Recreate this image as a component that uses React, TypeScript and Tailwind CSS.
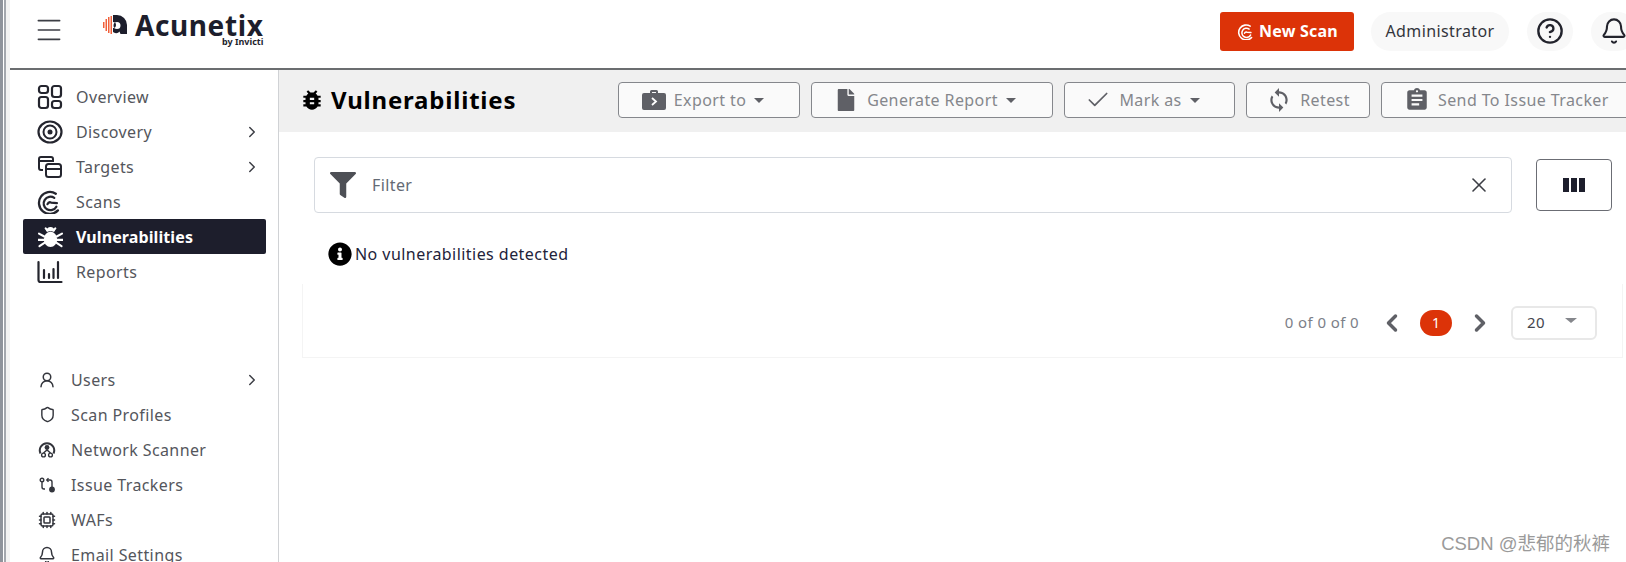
import { Bell, Check, ChevronRight, ChevronLeft, CircleHelp, Cpu, Menu, Shield, UserRound, X } from 'lucide-react';
import { FaFile, FaFilter, FaInfoCircle } from 'react-icons/fa';
import { MdAssignment, MdBugReport, MdSync } from 'react-icons/md';

const ScanMark = ({ className }: { className?: string }) => (
    <svg viewBox="0 0 24 24" fill="none" stroke="currentColor" strokeWidth="2.2" strokeLinecap="round" className={className}>
        <path d="M20 4.500A10.500 10.500 0 1 0 22 20.500" />
        <path d="M18.500 8.500A6.500 6.500 0 1 0 20.500 17" />
        <path d="M21 13.500 15.500 13a2.800 2.800 0 0 0-3.500 1.500" />
    </svg>
);

const BugIcon = ({ className }: { className?: string }) => (
    <svg viewBox="0 0 26 24" className={className}>
        <ellipse cx="13" cy="15" rx="7" ry="8" fill="currentColor" />
        <path d="M8.500 6.500a4.500 4.500 0 0 1 9 0z" fill="currentColor" />
        <path d="M8 3.500 10 6M18 3.500 16 6M1 9l5.500 3M25 9l-5.500 3M0 15.500h6M26 15.500h-6M1.500 22l5.500-3.500M24.500 22 19 18.500" stroke="currentColor" strokeWidth="2.200" strokeLinecap="round" fill="none" />
    </svg>
);

const OverviewIcon = () => (
    <svg viewBox="0 0 26 26" fill="none" stroke="currentColor" strokeWidth="2.2" className="w-[26px] h-[26px]">
        <rect x="2" y="2" width="9" height="7" rx="2.5" />
        <rect x="15" y="2" width="9" height="11" rx="2.5" />
        <rect x="2" y="13" width="9" height="11" rx="2.5" />
        <rect x="15" y="17" width="9" height="7" rx="2.5" />
    </svg>
);

const DiscoveryIcon = () => (
    <svg viewBox="0 0 26 26" fill="none" stroke="currentColor" className="w-[26px] h-[26px]">
        <ellipse cx="13" cy="13" rx="11.5" ry="10.5" strokeWidth="2.2" />
        <circle cx="13" cy="13" r="6.5" strokeWidth="2" />
        <circle cx="13" cy="13" r="2.5" fill="currentColor" stroke="none" />
    </svg>
);

const TargetsIcon = () => (
    <svg viewBox="0 0 26 26" fill="none" stroke="currentColor" strokeWidth="2" className="w-[26px] h-[26px]">
        <path d="M6 16H4a2 2 0 0 1-2-2V5a2 2 0 0 1 2-2h10a2 2 0 0 1 2 2v3" />
        <path d="M2 7h14" />
        <rect x="9" y="10" width="15" height="13" rx="2.5" />
        <path d="M9 15h15" />
    </svg>
);

const ReportsIcon = () => (
    <svg viewBox="0 0 26 26" fill="none" stroke="currentColor" strokeWidth="2.2" strokeLinecap="round" className="w-[26px] h-[26px]">
        <path d="M1.500 3v18a2 2 0 0 0 2 2h21" />
        <path d="M7 11v8M12 15v4M16.500 10v9M21 3v16" />
    </svg>
);

const NetworkIcon = () => (
    <svg viewBox="0 0 18 16" fill="none" stroke="currentColor" className="w-[18px] h-4">
        <path d="M2.500 11.500A7.200 7.200 0 1 1 15.500 11.500" strokeWidth="2" />
        <circle cx="9" cy="5.500" r="2.400" fill="currentColor" stroke="none" />
        <path d="M5.500 11 9 8l3.500 3" strokeWidth="1.500" />
        <circle cx="5.500" cy="13" r="1.900" strokeWidth="1.400" />
        <circle cx="12.500" cy="13" r="1.900" strokeWidth="1.400" />
    </svg>
);

const TrackerIcon = () => (
    <svg viewBox="0 0 16 16" fill="none" stroke="currentColor" strokeWidth="1.4" className="w-4 h-4">
        <circle cx="3" cy="3" r="1.800" />
        <path d="M3 5v5a2 2 0 0 0 2 2h1" />
        <path d="M8 3h3a2 2 0 0 1 2 2v5" />
        <path d="M9.500 1.300 7.800 3l1.700 1.700" />
        <circle cx="13" cy="12.500" r="2.200" fill="currentColor" />
    </svg>
);

const BriefcaseIcon = () => (
    <svg viewBox="0 0 24 22" className="w-6 h-[22px]">
        <path fill="#5f6066" d="M8 4V2.500A1.500 1.500 0 0 1 9.500 1h5A1.500 1.500 0 0 1 16 2.500V4h6a2 2 0 0 1 2 2v13a2 2 0 0 1-2 2H2a2 2 0 0 1-2-2V6a2 2 0 0 1 2-2h6Zm2-1v1h4V3h-4Z" />
        <path fill="none" stroke="#fff" strokeWidth="1.800" d="m10 9 4 3.500-4 3.500" />
    </svg>
);

const CaretDown = () => <span className="w-0 h-0 border-x-[5px] border-x-transparent border-t-[5px] border-t-[#5f6066]" />;

const MAIN_NAV = [
    { label: 'Overview', icon: <OverviewIcon /> },
    { label: 'Discovery', icon: <DiscoveryIcon />, more: true },
    { label: 'Targets', icon: <TargetsIcon />, more: true },
    { label: 'Scans', icon: <ScanMark className="w-[25px] h-[25px] -translate-x-[3px]" /> },
    { label: 'Vulnerabilities', icon: <BugIcon className="w-[25px] h-[23px]" />, active: true },
    { label: 'Reports', icon: <ReportsIcon /> },
];

const SETTINGS_NAV = [
    { label: 'Users', icon: <UserRound className="w-[18px] h-[18px]" />, more: true },
    { label: 'Scan Profiles', icon: <Shield className="w-[17px] h-[17px]" /> },
    { label: 'Network Scanner', icon: <NetworkIcon /> },
    { label: 'Issue Trackers', icon: <TrackerIcon /> },
    { label: 'WAFs', icon: <Cpu className="w-[18px] h-[18px]" /> },
    { label: 'Email Settings', icon: <Bell className="w-[18px] h-[18px]" /> },
];

export default function App() {
    return (
        <div className="relative flex w-[1626px] h-[562px] overflow-hidden bg-white font-['Noto_Sans',sans-serif] text-[#54565c]">
            {/* screenshot edge */}
            <div className="w-[10px] shrink-0 flex">
                <div className="w-[3px] bg-[#8f949c]" />
                <div className="w-[1px] bg-white" />
                <div className="w-[2px] bg-[#a4a8ae]" />
                <div className="w-[4px] bg-[#f3f3f3]" />
            </div>

            <div className="flex-1 min-w-0 flex flex-col">
                <header className="h-[70px] shrink-0 flex items-center border-b-2 border-[#6b6d70] relative">
                    <Menu className="ml-[23px] w-[32px] h-[32px] text-[#3c3e45] -mt-[8px]" strokeWidth={1.2} />
                    <div className="ml-[38px] flex flex-col -mt-[8px]">
                        <div className="flex items-center gap-[8px] h-[22px]">
                            <svg viewBox="0 0 24 20" className="w-[24px] h-[20px]">
                                <path fill="#f0603a" d="M0 7h1.500v6H0zM2.500 4H4v12H2.500zM5 2h1.500v16H5zM7.500 1H9v18H7.500z" />
                                <path fill="#1d1e2c" fillRule="evenodd" d="M10 0h4a10 10 0 0 1 10 10v9h-6.500l-1-2.500A4.500 4.500 0 0 1 10 17v2h0v-6a3 3 0 0 0 0-6zM14 7a3.500 3.500 0 1 0 0 7 3.500 3.500 0 0 0 0-7z" />
                            </svg>
                            <span className="text-[28px] font-bold leading-[22px] tracking-[0.6px] text-[#1d1e2c]">Acunetix</span>
                        </div>
                        <span className="self-end text-[9px] font-bold leading-[9px] mt-[1px] text-[#1d1e2c]">by Invicti</span>
                    </div>
                    <div className="ml-auto flex items-center -mr-[11px]">
                        <button className="w-[134px] h-[39px] mb-[6px] rounded-[3px] bg-[#dc3308] text-white text-[16px] tracking-[0.2px] font-bold flex items-center justify-center gap-[6px]">
                            <ScanMark className="w-[17px] h-[17px]" />
                            New Scan
                        </button>
                        <div className="ml-[17px] w-[138px] h-[39px] mb-[6px] rounded-full bg-[#f8f8f8] text-[16px] tracking-[0.4px] text-[#33353c] flex items-center justify-center">Administrator</div>
                        <div className="ml-[18px] w-[46px] h-[39px] mb-[6px] rounded-full bg-[#f8f8f8] flex items-center justify-center">
                            <CircleHelp className="w-[28px] h-[28px] text-[#22232c]" strokeWidth={2} />
                        </div>
                        <div className="ml-[18px] w-[46px] h-[39px] mb-[6px] rounded-full bg-[#f8f8f8] flex items-center justify-center">
                            <Bell className="w-[28px] h-[28px] text-[#22232c]" strokeWidth={1.8} />
                        </div>
                    </div>
                </header>

                <div className="flex-1 flex min-h-0">
                    <aside className="w-[269px] shrink-0 border-r border-[#d0d2d5] pt-[9px] pl-[13px] pr-[12px] overflow-hidden">
                        {MAIN_NAV.map((item) => (
                            <div key={item.label} className={`h-[35px] flex items-center pl-[14px] pr-[5px] text-[16px] ${item.active ? 'bg-[#1d1e2c] text-white font-bold rounded-[2px] tracking-[0.1px]' : 'text-[#54565c] tracking-[0.4px]'}`}>
                                <span className={`w-[26px] flex justify-center ${item.active ? 'text-white' : 'text-[#24252e]'}`}>{item.icon}</span>
                                <span className="ml-[13px]">{item.label}</span>
                                {item.more && <ChevronRight className="ml-auto w-[18px] h-[18px] text-[#3c3e45]" />}
                            </div>
                        ))}
                        <div className="h-[73px]" />
                        {SETTINGS_NAV.map((item) => (
                            <div key={item.label} className="h-[35px] flex items-center pl-[14px] pr-[5px] text-[16px] tracking-[0.4px] text-[#54565c]">
                                <span className="w-[20px] flex justify-center text-[#33353c]">{item.icon}</span>
                                <span className="ml-[14px]">{item.label}</span>
                                {item.more && <ChevronRight className="ml-auto w-[18px] h-[18px] text-[#3c3e45]" />}
                            </div>
                        ))}
                    </aside>

                    <main className="flex-1 min-w-0 overflow-hidden">
                        <div className="h-[62px] bg-[#f0f0f0] flex items-center pl-[20px] overflow-hidden">
                            <div className="w-[319px] shrink-0 flex items-center gap-[6px] mb-[2px]">
                                <MdBugReport className="w-[26px] h-[26px] text-black" />
                                <h1 className="text-[24px] font-bold text-black tracking-[0.8px]">Vulnerabilities</h1>
                            </div>
                            <div className="flex gap-[11px] shrink-0 mb-[2px] text-[16px] tracking-[0.4px] text-[#85878c]">
                                <button className="w-[182px] h-[36px] border border-[#85878c] rounded-[4px] bg-[#fafafa] flex items-center justify-center gap-[8px] pr-[12px]">
                                    <BriefcaseIcon />
                                    <span>Export to</span>
                                    <CaretDown />
                                </button>
                                <button className="w-[242px] h-[36px] border border-[#85878c] rounded-[4px] bg-[#fafafa] flex items-center justify-center gap-[8px] pr-[12px]">
                                    <FaFile className="w-[20px] h-[22px] text-[#5f6066]" />
                                    <span className="ml-[3px]">Generate Report</span>
                                    <CaretDown />
                                </button>
                                <button className="w-[171px] h-[36px] border border-[#85878c] rounded-[4px] bg-[#fafafa] flex items-center justify-center gap-[8px] pr-[14px]">
                                    <Check className="w-[26px] h-[26px] text-[#5f6066]" strokeWidth={1.600} />
                                    <span>Mark as</span>
                                    <CaretDown />
                                </button>
                                <button className="w-[124px] h-[36px] border border-[#85878c] rounded-[4px] bg-[#fafafa] flex items-center justify-center gap-[8px]">
                                    <MdSync className="w-[26px] h-[26px] text-[#5f6066]" />
                                    <span>Retest</span>
                                </button>
                                <button className="w-[252px] h-[36px] border border-[#85878c] rounded-[4px] bg-[#fafafa] flex items-center pl-[22px] gap-[8px]">
                                    <MdAssignment className="w-[26px] h-[26px] text-[#5f6066]" />
                                    <span>Send To Issue Tracker</span>
                                </button>
                            </div>
                        </div>

                        <div className="pl-[35px] pt-[25px] flex items-center gap-[24px]">
                            <div className="w-[1198px] h-[56px] border border-[#d6dae0] rounded-[4px] flex items-center pl-[14px] pr-[20px]">
                                <FaFilter className="w-[28px] h-[26px] text-[#4d4f55]" />
                                <span className="ml-[15px] text-[16px] tracking-[0.4px] text-[#646a74]">Filter</span>
                                <X className="ml-auto w-[24px] h-[24px] text-[#3c3e45]" strokeWidth={1.600} />
                            </div>
                            <div className="w-[76px] h-[52px] border border-[#6b6d74] rounded-[4px] flex items-center justify-center gap-[2px]">
                                <span className="w-[6px] h-[14px] bg-[#1d1e2c]" />
                                <span className="w-[6px] h-[14px] bg-[#1d1e2c]" />
                                <span className="w-[6px] h-[14px] bg-[#1d1e2c]" />
                            </div>
                        </div>

                        <div className="pl-[49px] mt-[29px] flex items-center gap-[3px] text-[16px] tracking-[0.45px] text-[#22233a]">
                            <FaInfoCircle className="w-[24px] h-[24px] text-black" />
                            <span>No vulnerabilities detected</span>
                        </div>

                        <div className="ml-[23px] mr-[3px] mt-[18px] h-[74px] border border-[#f4f4f4] border-t-0 flex items-center justify-end pr-[25px] pt-[4px]">
                            <span className="text-[15px] tracking-[0.4px] text-[#7c8088]">0 of 0 of 0</span>
                            <ChevronLeft className="ml-[19px] w-[28px] h-[28px] text-[#5f6066]" strokeWidth={3} />
                            <span className="ml-[14px] w-[32px] h-[26px] rounded-full bg-[#dc3308] text-white text-[14px] flex items-center justify-center">1</span>
                            <ChevronRight className="ml-[14px] w-[28px] h-[28px] text-[#5f6066]" strokeWidth={3} />
                            <div className="ml-[17px] w-[86px] h-[34px] border-2 border-[#e8e8e8] rounded-[6px] flex items-center pl-[14px] pr-[18px] justify-between text-[15px] tracking-[0.4px] text-[#44464e]">
                                <span>20</span>
                                <span className="w-0 h-0 border-x-[6px] border-x-transparent border-t-[5px] border-t-[#85878c] -mt-[4px]" />
                            </div>
                        </div>
                    </main>
                </div>
            </div>

            {/* page watermark */}
            <span className="absolute right-[16px] bottom-[7px] text-[18.500px] leading-[22px] text-[#9a9a9a] font-['Liberation_Sans','Noto_Sans_CJK_SC',sans-serif]">CSDN @悲郁的秋裤</span>
        </div>
    );
}
